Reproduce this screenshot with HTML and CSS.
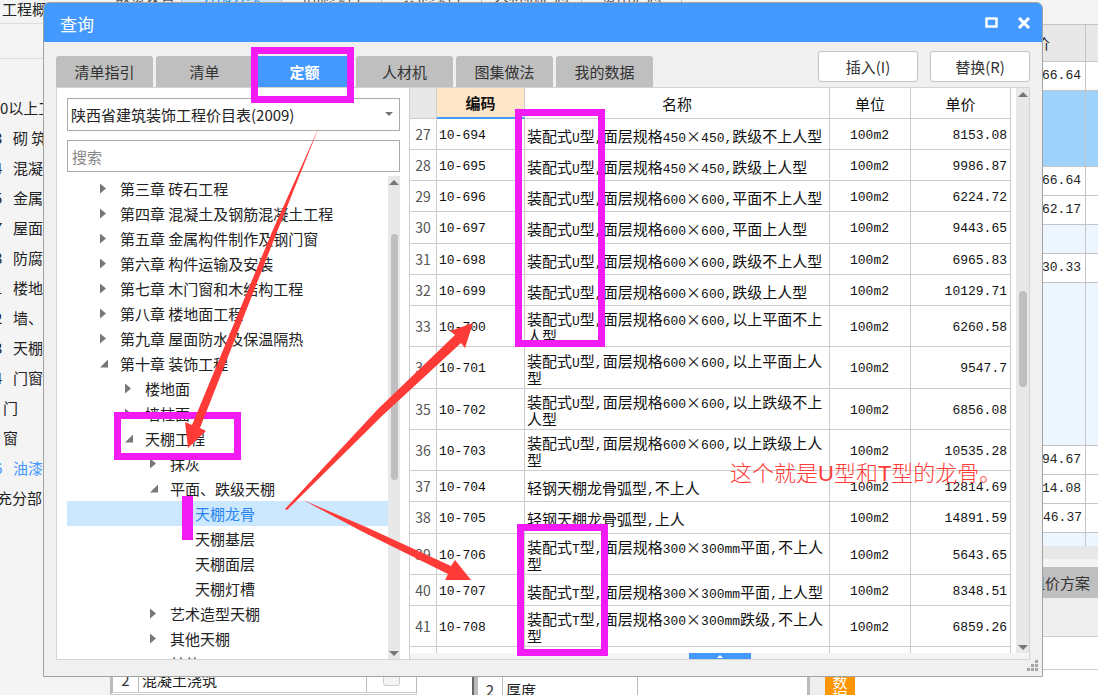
FILE: index.html
```html
<!DOCTYPE html>
<html lang="zh-CN">
<head>
<meta charset="utf-8">
<title>查询</title>
<link rel="stylesheet" href="styles.css">
</head>
<body>
<div class="app">
  <aside class="outline">
    <div class="outline-title">工程概况</div>
    <div class="outline-bar"></div>
    <ul class="outline-list">
      <li class="flush">0以上工程</li>
      <li><span>3</span>砌 筑</li>
      <li><span>4</span>混凝土</li>
      <li><span>5</span>金属</li>
      <li><span>7</span>屋面</li>
      <li><span>8</span>防腐</li>
      <li><span>1</span>楼地面</li>
      <li><span>2</span>墙、柱</li>
      <li><span>3</span>天棚</li>
      <li><span>4</span>门窗</li>
      <li class="leaf">门</li>
      <li class="leaf">窗</li>
      <li class="current"><span>6</span>油漆</li>
      <li class="cut">充分部</li>
    </ul>
  </aside>
  <main class="workspace">
    <nav class="sheet-tabs">
      <a href="#">取费设置</a><a href="#" class="on">分部分项</a><a href="#">措施项目</a><a href="#">其他项目</a><a href="#">人材机汇总</a><a href="#">费用汇总</a>
    </nav>
    <div class="lower">
      <div class="lower-left">
        <div class="num">2</div><div class="desc">混凝土浇筑</div>
        <div class="tick"><input type="checkbox" aria-label="混凝土浇筑"></div>
      </div>
      <div class="blank"></div>
      <div class="splitter"></div>
      <div class="lower-right">
        <div class="num">2</div><div class="desc">厚度</div><div class="value"></div>
      </div>
      <div class="gutter"></div>
      <button class="data-tab" type="button">数据</button>
      <div class="rest"></div>
    </div>
  </main>
  <aside class="prices">
    <table>
      <thead><tr><th>综合单价</th><th></th></tr></thead>
      <tbody>
        <tr><td>66.64</td><td></td></tr>
        <tr class="picked"><td></td><td></td></tr>
        <tr><td>66.64</td><td></td></tr>
        <tr><td>62.17</td><td></td></tr>
        <tr class="tint"><td></td><td></td></tr>
        <tr><td>30.33</td><td></td></tr>
        <tr class="tint big"><td></td><td></td></tr>
        <tr><td>94.67</td><td></td></tr>
        <tr><td>14.08</td><td></td></tr>
        <tr><td>346.37</td><td></td></tr>
        <tr class="tint small"><td></td><td></td></tr>
      </tbody>
    </table>
    <div class="band"></div>
    <div class="plan">组价方案</div>
    <div class="plan-tools"></div>
    <div class="plan-row"></div>
  </aside>
</div>

<section class="dialog" role="dialog" aria-labelledby="dlg-title">
  <header class="titlebar">
    <h1 id="dlg-title">查询</h1>
    <button type="button" aria-label="最大化"><svg width="14" height="12" viewBox="0 0 14 12"><rect x="1.5" y="1.5" width="10" height="8" fill="none" stroke="#fff" stroke-width="2.4"/></svg></button>
    <button type="button" aria-label="关闭"><svg width="14" height="12" viewBox="0 0 14 12"><path d="M2 1 12 11M12 1 2 11" fill="none" stroke="#fff" stroke-width="3"/></svg></button>
  </header>
  <div class="toolbar">
    <nav class="tabs">
      <button type="button">清单指引</button><button type="button">清单</button><button type="button" class="active">定额</button><button type="button">人材机</button><button type="button">图集做法</button><button type="button">我的数据</button>
    </nav>
    <div class="actions"><button type="button">插入(I)</button><button type="button">替换(R)</button></div>
  </div>
  <div class="content">
    <div class="side">
      <label class="picker"><select aria-label="价目表"><option>陕西省建筑装饰工程价目表(2009)</option></select></label>
      <input class="search" type="text" placeholder="搜索" aria-label="搜索">
      <div class="tree-wrap">
        <ul class="tree">
          <li class="l1 shut">第三章 砖石工程</li>
          <li class="l1 shut">第四章 混凝土及钢筋混凝土工程</li>
          <li class="l1 shut">第五章 金属构件制作及钢门窗</li>
          <li class="l1 shut">第六章 构件运输及安装</li>
          <li class="l1 shut">第七章 木门窗和木结构工程</li>
          <li class="l1 shut">第八章 楼地面工程</li>
          <li class="l1 shut">第九章 屋面防水及保温隔热</li>
          <li class="l1 open">第十章 装饰工程</li>
          <li class="l2 shut">楼地面</li>
          <li class="l2 shut">墙柱面</li>
          <li class="l2 open">天棚工程</li>
          <li class="l3 shut">抹灰</li>
          <li class="l3 open">平面、跌级天棚</li>
          <li class="l4 selected">天棚龙骨</li>
          <li class="l4">天棚基层</li>
          <li class="l4">天棚面层</li>
          <li class="l4">天棚灯槽</li>
          <li class="l3 shut">艺术造型天棚</li>
          <li class="l3 shut">其他天棚</li>
          <li class="l3">其他</li>
        </ul>
        <div class="scroll tree-scroll"><i class="up"></i><i class="thumb"></i><i class="down"></i></div>
      </div>
    </div>
    <div class="main">
      <div class="grid-wrap">
        <div class="grid-clip">
        <table class="grid">
          <colgroup><col class="c-no"><col class="c-code"><col><col class="c-unit"><col class="c-price"></colgroup>
          <thead><tr><th class="corner"></th><th class="sorted">编码</th><th>名称</th><th>单位</th><th>单价</th></tr></thead>
          <tbody>
            <tr><th>27</th><td>10-694</td><td>装配式<b>U</b>型<b>,</b>面层规格<b>450</b>×<b>450,</b>跌级不上人型</td><td>100m2</td><td>8153.08</td></tr>
            <tr><th>28</th><td>10-695</td><td>装配式<b>U</b>型<b>,</b>面层规格<b>450</b>×<b>450,</b>跌级上人型</td><td>100m2</td><td>9986.87</td></tr>
            <tr><th>29</th><td>10-696</td><td>装配式<b>U</b>型<b>,</b>面层规格<b>600</b>×<b>600,</b>平面不上人型</td><td>100m2</td><td>6224.72</td></tr>
            <tr><th>30</th><td>10-697</td><td>装配式<b>U</b>型<b>,</b>面层规格<b>600</b>×<b>600,</b>平面上人型</td><td>100m2</td><td>9443.65</td></tr>
            <tr><th>31</th><td>10-698</td><td>装配式<b>U</b>型<b>,</b>面层规格<b>600</b>×<b>600,</b>跌级不上人型</td><td>100m2</td><td>6965.83</td></tr>
            <tr><th>32</th><td>10-699</td><td>装配式<b>U</b>型<b>,</b>面层规格<b>600</b>×<b>600,</b>跌级上人型</td><td>100m2</td><td>10129.71</td></tr>
            <tr class="tall"><th>33</th><td>10-700</td><td>装配式<b>U</b>型<b>,</b>面层规格<b>600</b>×<b>600,</b>以上平面不上人型</td><td>100m2</td><td>6260.58</td></tr>
            <tr class="tall"><th>34</th><td>10-701</td><td>装配式<b>U</b>型<b>,</b>面层规格<b>600</b>×<b>600,</b>以上平面上人型</td><td>100m2</td><td>9547.7</td></tr>
            <tr class="tall"><th>35</th><td>10-702</td><td>装配式<b>U</b>型<b>,</b>面层规格<b>600</b>×<b>600,</b>以上跌级不上人型</td><td>100m2</td><td>6856.08</td></tr>
            <tr class="tall"><th>36</th><td>10-703</td><td>装配式<b>U</b>型<b>,</b>面层规格<b>600</b>×<b>600,</b>以上跌级上人型</td><td>100m2</td><td>10535.28</td></tr>
            <tr><th>37</th><td>10-704</td><td>轻钢天棚龙骨弧型<b>,</b>不上人</td><td>100m2</td><td>12814.69</td></tr>
            <tr><th>38</th><td>10-705</td><td>轻钢天棚龙骨弧型<b>,</b>上人</td><td>100m2</td><td>14891.59</td></tr>
            <tr class="tall"><th>39</th><td>10-706</td><td>装配式<b>T</b>型<b>,</b>面层规格<b>300</b>×<b>300mm</b>平面<b>,</b>不上人型</td><td>100m2</td><td>5643.65</td></tr>
            <tr><th>40</th><td>10-707</td><td>装配式<b>T</b>型<b>,</b>面层规格<b>300</b>×<b>300mm</b>平面<b>,</b>上人型</td><td>100m2</td><td>8348.51</td></tr>
            <tr class="tall"><th>41</th><td>10-708</td><td>装配式<b>T</b>型<b>,</b>面层规格<b>300</b>×<b>300mm</b>跌级<b>,</b>不上人型</td><td>100m2</td><td>6859.26</td></tr>
            <tr><th></th><td></td><td></td><td></td><td></td></tr>
          </tbody>
        </table>
        </div>
        <div class="scroll grid-scroll"><i class="up"></i><i class="thumb"></i><i class="down"></i></div>
      </div>
      <div class="drawer"><button type="button" aria-label="展开"></button></div>
    </div>
  </div>
  <footer class="statusbar">
    <svg width="12" height="12" viewBox="0 0 12 12" fill="#a6a6a6"><path d="M8 0h3v3H8zM4 4h3v3H4zM8 4h3v3H8zM0 8h3v3H0zM4 8h3v3H4zM8 8h3v3H8z"/></svg>
  </footer>
</section>

<svg class="marks" width="1098" height="695" viewBox="0 0 1098 695" aria-hidden="true">
  <g fill="none" stroke="#f31bf3" stroke-width="7">
    <rect x="254.500" y="50.500" width="96" height="49"/>
    <rect x="117.500" y="415.500" width="120" height="41"/>
    <rect x="518.500" y="112.500" width="83" height="231"/>
    <rect x="520.500" y="527.500" width="84" height="125"/>
  </g>
  <rect x="182" y="496" width="11" height="44" fill="#f31bf3"/>
  <g fill="#ff3b38">
    <path d="M319 127 272 232 192 425 185 422 188 448 206 431 200 428 277 232Z"/>
    <path d="M285 509 378 409 455 335 450 331 473 323 465 348 461 343 383 415 287 510Z"/>
    <path d="M303 500 366 527 451 566 455 560 471 580 445 580 448 574 363 532Z"/>
  </g>
</svg>
<p class="note">这个就是U型和T型的龙骨。</p>
</body>
</html>
```
FILE: styles.css
```css
* { box-sizing: border-box; }

body {
  margin: 0;
  height: 100vh;
  overflow: hidden;
  position: relative;
  background: #fff;
  color: #222;
  font: 15px/20px "Noto Sans CJK SC", "Noto Sans", sans-serif;
}

button, input, select { font: inherit; color: inherit; }
ul { list-style: none; margin: 0; padding: 0; }

/* Main window behind the dialog */
.app {
  display: grid;
  grid-template-columns: 110px minmax(0, 1fr) 56px;
  height: 100%;
}

.outline { background: #f4f4f4; overflow: hidden; white-space: nowrap; }
.outline-title { height: 24px; padding-left: 2px; line-height: 17px; border-bottom: 1px solid #ddd; }
.outline-bar { height: 35px; margin-bottom: 34px; border-bottom: 1px solid #ddd; }
.outline-list li { height: 30px; line-height: 30px; margin-left: -6px; }
.outline-list span { display: inline-block; width: 19px; }
.outline-list .flush { margin-left: 0; }
.outline-list .leaf { margin-left: 3px; }
.outline-list .cut { margin-left: -3px; }
.outline-list .current { color: #4499ff; }

.workspace { display: flex; flex-direction: column; justify-content: space-between; min-width: 0; overflow: hidden; }
.sheet-tabs { display: flex; height: 3px; align-items: flex-end; background: #f4f4f4; overflow: hidden; }
.sheet-tabs a { width: 100px; flex: none; text-align: center; color: #555; text-decoration: none; line-height: 15px; border-right: 1px solid #bbb; }
.sheet-tabs a:first-child { width: 72px; }
.sheet-tabs .on { background: #cce7ff; color: #2288ee; }

.lower { display: flex; height: 18px; overflow: hidden; }
.lower-left { display: flex; flex: 0 0 307px; border-left: 3px solid #bbb; border-right: 1px solid #bbb; border-bottom: 3px double #ccc; }
.num { width: 26px; text-align: center; border-right: 1px solid #bbb; line-height: 6px; color: #333; }
.desc { flex: 1; padding-left: 3px; line-height: 6px; }
.tick { width: 50px; border-left: 1px solid #bbb; text-align: center; }
.tick input { appearance: none; width: 17px; height: 14px; margin: -5px 0 0; background: #f4f4f4; border: 1px solid #ccc; border-radius: 3px; vertical-align: top; }
.blank { width: 55px; }
.splitter { width: 6px; background: #bbb; border-left: 2px solid #666; }
.lower-right { display: flex; flex: 1; border-right: 3px solid #bbb; }
.lower-right .num, .lower-right .desc { line-height: 26px; }
.lower-right .num { width: 25px; }
.lower-right .desc { flex: 0 0 135px; border-right: 1px solid #bbb; }
.gutter { width: 15px; background: #eee; }
.data-tab { width: 30px; padding: 0 7px; border: 0; background: #ff9500; color: #fff; line-height: 15px; height: 35px; margin-top: -6px; }
.rest { flex: 0 0 187px; background: #fff; }

.prices { display: flex; flex-direction: column; background: #fff; overflow: hidden; padding-top: 24px; box-shadow: inset 0 24px #f4f4f4; }
.prices table { table-layout: fixed; width: 100%; border-collapse: separate; border-spacing: 0; border-top: 1px solid #c4c4c4; }
.prices th:first-child { width: 44px; }
.prices th { height: 37px; padding: 0 36px 0 0; background: #e8e8e8; font-weight: 400; direction: rtl; white-space: nowrap; overflow: hidden; }
.prices th, .prices td { border: solid #c4c4c4; border-width: 0 1px 1px 0; }
.prices td { height: 29px; padding: 0 4px 0 0; font: 13px/20px "Liberation Mono", monospace; direction: rtl; overflow: hidden; }
.prices .picked td { height: 76px; background: #9fd3fb; }
.prices .tint td { background: #edf5ff; }
.prices .big td { height: 163px; }
.prices .small td { height: 13px; border-bottom: 0; }
.prices tr > :last-child { border-right: 0; }
.band { height: 21px; background: #f4f4f4; border-top: 13px solid #e8e8e8; }
.plan { height: 31px; padding-right: 8px; line-height: 31px; background: #bfbfbf; direction: rtl; white-space: nowrap; color: #333; }
.plan-tools { height: 39px; background: #efefef; border-bottom: 1px solid #ccc; }
.plan-row { height: 33px; border-bottom: 1px solid #ccc; }

/* Query dialog */
.dialog {
  position: absolute;
  top: 2px;
  right: 55px;
  bottom: 18px;
  left: 43px;
  display: flex;
  flex-direction: column;
  background: #f0f0f0;
  border: 1px solid #a3a3a3;
  border-radius: 6px 6px 0 0;
  overflow: hidden;
}

.titlebar { display: flex; align-items: center; gap: 18px; flex: 0 0 39px; padding: 0 11px 0 16px; background: #4499ff; color: #fff; }
.titlebar h1 { flex: 1; margin: 0; font-size: 17px; line-height: 24px; font-weight: 400; padding-top: 2px; }
.titlebar button { display: flex; padding: 0; border: 0; background: none; }

.toolbar { display: flex; justify-content: space-between; flex: 0 0 45px; padding: 9px 12px 0; }
.tabs { display: flex; gap: 3px; padding-top: 5px; }
.tabs button { width: 97px; height: 31px; padding: 0; border: 0; border-radius: 3px 3px 0 0; background: #bfbfbf; color: #333; }
.tabs .active { background: #4499ff; color: #fff; font-weight: 700; }
.actions { display: flex; gap: 12px; }
.actions button { width: 100px; height: 31px; padding: 0; background: #fff; border: 1px solid #c4c4c4; border-radius: 3px; color: #333; }

.content { display: flex; flex: 1; min-height: 0; margin: 0 12px; border: 1px solid #d4d4d4; background: #fff; }
.side { display: flex; flex-direction: column; flex: 0 0 353px; padding: 10px 9px 0 10px; border-right: 1px solid #ccc; }
.picker { position: relative; display: block; margin-bottom: 9px; }
.picker select { display: block; appearance: none; width: 100%; height: 33px; padding: 0 3px; background: #fff; border: 1px solid #aaa; border-radius: 0; }
.picker::after { content: ""; position: absolute; top: 14px; right: 7px; border: 4px solid transparent; border-top-color: #777; border-bottom: 0; }
.search { height: 32px; margin-bottom: 4px; padding: 0 4px; border: 1px solid #aaa; }
.search::placeholder { color: #888; opacity: 1; }

.tree-wrap { display: flex; flex: 1; min-height: 0; }
.tree { flex: 1; overflow: hidden; }
.tree li { display: flex; align-items: center; height: 25px; }
.tree li::before { content: ""; flex: 0 0 8px; height: 8px; margin-right: 12px; }
.tree .shut::before { height: 10px; background: #777; clip-path: polygon(0 0, 6px 50%, 0 100%); }
.tree .open::before { background: #777; clip-path: polygon(100% 0, 100% 100%, 0 100%); }
.l1 { padding-left: 33px; }
.l2 { padding-left: 58px; }
.l3 { padding-left: 83px; }
.l4 { padding-left: 108px; }
.tree .selected { background: #cce8ff; color: #2a85f0; }

.scroll { position: relative; flex: none; background: #e8e8e8; }
.scroll i { position: absolute; }
.scroll .up { top: 4px; left: 50%; margin-left: -5px; border: 5px solid transparent; border-top: 0; border-bottom-color: #777; }
.scroll .down { bottom: 3px; left: 50%; margin-left: -5px; border: 5px solid transparent; border-bottom: 0; border-top-color: #777; }
.scroll .thumb { left: 3px; right: 2px; border-radius: 4px; background: #bfbfbf; }
.tree-scroll { width: 12px; }
.tree-scroll .thumb { top: 12%; height: 51%; }
.grid-scroll { width: 13px; margin-left: 5px; }
.grid-scroll .thumb { top: 36%; height: 17%; }

.main { display: flex; flex-direction: column; flex: 1; min-width: 0; }
.grid-wrap { display: flex; flex: 1; min-height: 0; }
.grid-clip { flex: 1; overflow: hidden; }
.grid { width: 100%; table-layout: fixed; border-collapse: separate; border-spacing: 0; }
.c-no { width: 27px; }
.c-code { width: 88px; }
.c-unit { width: 81px; }
.c-price { width: 100px; }
.grid th, .grid td { height: 31px; padding: 2px 3px 0 2px; border-right: 1px solid #ccc; border-bottom: 1px solid #ccc; color: #111; line-height: 17px; }
.grid thead th { height: 31px; padding: 0; font-weight: 400; }
.grid thead .corner { background: #e8e8e8; }
.grid thead .sorted { background: #ffe6c8; border-bottom: 2px solid #4499ff; font-weight: 700; }
.grid tbody th { padding: 0; font: 14px/17px "Noto Sans CJK SC", sans-serif; color: #555; }
.grid td { font: 13px/17px "Liberation Mono", monospace; }
.grid td:nth-child(3) { padding-right: 0; font: 15px/17px "Noto Sans CJK SC", sans-serif; }
.grid td:nth-child(4) { text-align: center; }
.grid td:nth-child(5) { text-align: right; }
.grid td b { font: 13px/1px "Liberation Mono", monospace; }
.grid .tall > * { height: 41px; }
.grid tbody tr:nth-child(4n) > * { height: 32px; }
.grid tbody .tall:nth-child(4n) > * { height: 42px; }

.drawer { display: flex; justify-content: center; flex: 0 0 6px; background: #f4f4f4; }
.drawer button { width: 62px; height: 6px; padding: 0; border: 0; background: #4499ff; display: flex; justify-content: center; align-items: center; }
.drawer button::before { content: ""; border: 3px solid transparent; border-top: 0; border-bottom-color: #fff; }

.statusbar { display: flex; justify-content: flex-end; flex: 0 0 16px; padding: 0 3px; }

/* Drawn-on marks and remark */
.marks { position: absolute; top: 0; left: 0; pointer-events: none; }
.note { position: absolute; top: 458px; left: 730px; margin: 0; color: #ff3b38; font: 300 22px/32px "Liberation Sans", "Noto Sans CJK SC", sans-serif; white-space: nowrap; }
```
